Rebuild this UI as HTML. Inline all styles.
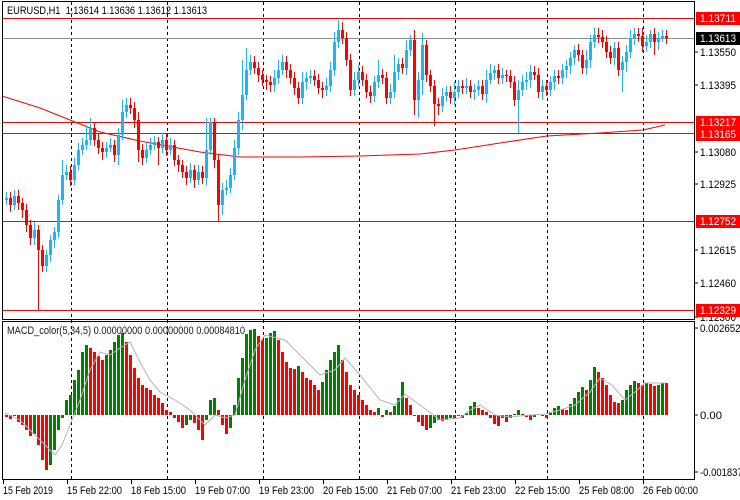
<!DOCTYPE html>
<html><head><style>
html,body{margin:0;padding:0;background:#fff;width:740px;height:500px;overflow:hidden}
svg{display:block;font-family:"Liberation Sans",sans-serif}
</style></head><body>
<svg width="740" height="500" xmlns="http://www.w3.org/2000/svg">
<g stroke="#000" stroke-dasharray="3,3">
<line x1="71.5" y1="2" x2="71.5" y2="479"/><line x1="167.5" y1="2" x2="167.5" y2="479"/><line x1="263.5" y1="2" x2="263.5" y2="479"/><line x1="359.5" y1="2" x2="359.5" y2="479"/><line x1="455.5" y1="2" x2="455.5" y2="479"/><line x1="547.5" y1="2" x2="547.5" y2="479"/><line x1="643.5" y1="2" x2="643.5" y2="479"/>
</g>
<g stroke="#f00">
<line x1="2" y1="18.5" x2="694" y2="18.5"/><line x1="2" y1="122.5" x2="694" y2="122.5"/><line x1="2" y1="133.5" x2="694" y2="133.5"/><line x1="2" y1="221.5" x2="694" y2="221.5"/><line x1="2" y1="310.5" x2="694" y2="310.5"/>
</g>
<line x1="2" y1="38.5" x2="694" y2="38.5" stroke="#8c8c8c"/>
<polyline fill="none" stroke="#f00" points="2,96 40,108 70,120 100,132 140,141 200,152 240,157 300,157 360,156 420,154 455,150 500,143 547,136 600,133 643,130 665,125"/>

<path stroke="#1eb4f5" fill="none" d="M6.5,192V205 M14.5,190V210 M34.5,222V245 M46.5,250V272 M50.5,235V262 M54.5,227V248 M58.5,195V238 M62.5,160V205 M66.5,165V180 M74.5,158V185 M78.5,143V170 M82.5,138V155 M86.5,125V150 M90.5,118V145 M106.5,142V158 M110.5,138V152 M118.5,128V165 M122.5,100V140 M126.5,98V118 M146.5,143V163 M150.5,138V155 M154.5,136V150 M162.5,133V153 M170.5,138V155 M190.5,163V183 M198.5,165V185 M206.5,118V185 M210.5,118V155 M222.5,183V215 M226.5,180V195 M230.5,168V193 M234.5,140V180 M238.5,112V155 M242.5,60V130 M246.5,48V100 M250.5,55V75 M274.5,70V92 M278.5,60V84 M282.5,55V75 M302.5,72V104 M306.5,72V90 M310.5,70V84 M326.5,78V96 M330.5,62V92 M334.5,32V76 M338.5,20V48 M354.5,72V96 M358.5,65V86 M374.5,76V102 M378.5,60V88 M390.5,84V104 M394.5,55V98 M398.5,58V80 M406.5,40V75 M410.5,35V56 M418.5,72V118 M422.5,33V95 M442.5,88V112 M446.5,86V102 M454.5,82V105 M458.5,80V98 M466.5,78V94 M474.5,84V100 M478.5,80V96 M486.5,70V103 M490.5,64V84 M494.5,65V80 M502.5,68V84 M518.5,80V133 M522.5,75V96 M526.5,72V90 M530.5,65V88 M542.5,80V100 M550.5,76V96 M554.5,70V90 M562.5,64V84 M566.5,60V78 M570.5,52V74 M574.5,45V65 M586.5,50V75 M590.5,35V68 M594.5,28V48 M614.5,42V65 M622.5,56V92 M626.5,45V72 M630.5,30V58 M634.5,28V45 M646.5,35V52 M650.5,30V48 M658.5,32V50 M662.5,30V42"/>
<path stroke="#f00" fill="none" d="M10.5,192V212 M18.5,190V210 M22.5,198V218 M26.5,204V232 M30.5,220V245 M38.5,225V310 M42.5,245V272 M70.5,166V186 M94.5,122V146 M98.5,134V154 M102.5,142V160 M114.5,140V162 M130.5,98V114 M134.5,102V128 M138.5,112V162 M142.5,144V165 M158.5,137V165 M166.5,134V156 M174.5,140V166 M178.5,155V172 M182.5,160V178 M186.5,166V185 M194.5,165V188 M202.5,166V184 M214.5,118V168 M218.5,155V222 M254.5,56V74 M258.5,62V82 M262.5,70V86 M266.5,75V90 M270.5,76V92 M286.5,56V78 M290.5,64V84 M294.5,72V95 M298.5,82V104 M314.5,70V86 M318.5,74V94 M322.5,82V98 M342.5,22V44 M346.5,32V66 M350.5,54V96 M362.5,66V86 M366.5,74V98 M370.5,86V103 M382.5,69V84 M386.5,72V104 M402.5,58V74 M414.5,30V115 M426.5,40V82 M430.5,70V92 M434.5,80V126 M438.5,98V115 M450.5,86V104 M462.5,80V94 M470.5,80V98 M482.5,80V100 M498.5,64V84 M506.5,70V82 M510.5,70V88 M514.5,76V106 M534.5,66V80 M538.5,68V98 M546.5,80V96 M558.5,70V84 M578.5,44V61 M582.5,50V74 M598.5,28V43 M602.5,30V48 M606.5,36V58 M610.5,46V64 M618.5,42V76 M638.5,28V42 M642.5,28V52 M654.5,28V55 M666.5,30V44"/>
<path fill="#1eb4f5" d="M5,198h3v2h-3z M13,196h3v9h-3z M33,230h3v8h-3z M45,255h3v11h-3z M49,240h3v15h-3z M53,232h3v8h-3z M57,200h3v32h-3z M61,175h3v25h-3z M65,172h3v3h-3z M73,165h3v15h-3z M77,150h3v15h-3z M81,145h3v5h-3z M85,140h3v5h-3z M89,128h3v12h-3z M105,148h3v4h-3z M109,145h3v3h-3z M117,135h3v20h-3z M121,112h3v23h-3z M125,105h3v7h-3z M145,150h3v8h-3z M149,145h3v5h-3z M153,142h3v3h-3z M161,140h3v8h-3z M169,145h3v5h-3z M189,170h3v8h-3z M197,172h3v8h-3z M205,150h3v28h-3z M209,122h3v28h-3z M221,190h3v15h-3z M225,188h3v2h-3z M229,175h3v13h-3z M233,148h3v27h-3z M237,120h3v28h-3z M241,95h3v25h-3z M245,70h3v25h-3z M249,62h3v8h-3z M273,78h3v7h-3z M277,70h3v8h-3z M281,62h3v8h-3z M301,82h3v16h-3z M305,78h3v4h-3z M309,76h3v2h-3z M325,86h3v4h-3z M329,70h3v16h-3z M333,42h3v28h-3z M337,30h3v12h-3z M353,80h3v10h-3z M357,72h3v8h-3z M373,82h3v14h-3z M377,75h3v7h-3z M389,92h3v6h-3z M393,72h3v20h-3z M397,64h3v8h-3z M405,50h3v18h-3z M409,40h3v10h-3z M417,80h3v20h-3z M421,45h3v35h-3z M441,96h3v10h-3z M445,92h3v4h-3z M453,92h3v6h-3z M457,86h3v6h-3z M465,86h3v2h-3z M473,90h3v2h-3z M477,86h3v4h-3z M485,80h3v14h-3z M489,73h3v7h-3z M493,70h3v3h-3z M501,75h3v3h-3z M517,90h3v10h-3z M521,82h3v8h-3z M525,80h3v2h-3z M529,72h3v8h-3z M541,86h3v6h-3z M549,82h3v8h-3z M553,76h3v6h-3z M561,70h3v8h-3z M565,66h3v4h-3z M569,58h3v8h-3z M573,50h3v8h-3z M585,60h3v8h-3z M589,42h3v18h-3z M593,35h3v7h-3z M613,48h3v10h-3z M621,62h3v8h-3z M625,52h3v10h-3z M629,38h3v14h-3z M633,34h3v4h-3z M645,42h3v4h-3z M649,34h3v8h-3z M657,38h3v4h-3z M661,36h3v2h-3z"/>
<path fill="#f00" d="M9,198h3v7h-3z M17,196h3v7h-3z M21,203h3v7h-3z M25,210h3v15h-3z M29,225h3v13h-3z M37,230h3v20h-3z M41,250h3v16h-3z M69,172h3v8h-3z M93,128h3v12h-3z M97,140h3v8h-3z M101,148h3v4h-3z M113,145h3v10h-3z M129,105h3v3h-3z M133,108h3v12h-3z M137,120h3v30h-3z M141,150h3v8h-3z M157,142h3v6h-3z M165,140h3v10h-3z M173,145h3v15h-3z M177,160h3v5h-3z M181,165h3v7h-3z M185,172h3v6h-3z M193,170h3v10h-3z M201,172h3v6h-3z M213,122h3v38h-3z M217,160h3v45h-3z M253,62h3v6h-3z M257,68h3v7h-3z M261,75h3v5h-3z M265,80h3v2h-3z M269,82h3v3h-3z M285,62h3v8h-3z M289,70h3v8h-3z M293,78h3v10h-3z M297,88h3v10h-3z M313,76h3v4h-3z M317,80h3v8h-3z M321,88h3v2h-3z M341,30h3v8h-3z M345,38h3v22h-3z M349,60h3v30h-3z M361,72h3v8h-3z M365,80h3v12h-3z M369,92h3v4h-3z M381,75h3v3h-3z M385,78h3v20h-3z M401,64h3v4h-3z M413,40h3v60h-3z M425,45h3v30h-3z M429,75h3v11h-3z M433,86h3v18h-3z M437,104h3v2h-3z M449,92h3v6h-3z M461,86h3v2h-3z M469,86h3v6h-3z M481,86h3v8h-3z M497,70h3v8h-3z M505,75h3v1h-3z M509,76h3v6h-3z M513,82h3v18h-3z M533,72h3v3h-3z M537,75h3v17h-3z M545,86h3v4h-3z M557,76h3v2h-3z M577,50h3v5h-3z M581,55h3v13h-3z M597,35h3v2h-3z M601,37h3v5h-3z M605,42h3v10h-3z M609,52h3v6h-3z M617,48h3v22h-3z M637,34h3v2h-3z M641,36h3v10h-3z M653,34h3v8h-3z M665,36h3v2h-3z"/>

<path fill="#008000" d="M13,415h3v1h-3z M33,415h3v19h-3z M49,415h3v50h-3z M53,415h3v35h-3z M57,415h3v15h-3z M61,415h3v3h-3z M65,400h3v15h-3z M69,395h3v20h-3z M73,380h3v35h-3z M77,370h3v45h-3z M81,352h3v63h-3z M85,345h3v70h-3z M105,355h3v60h-3z M109,350h3v65h-3z M113,342h3v73h-3z M117,335h3v80h-3z M121,333h3v82h-3z M185,415h3v10h-3z M189,415h3v5h-3z M205,415h3v5h-3z M209,400h3v15h-3z M213,398h3v17h-3z M229,415h3v13h-3z M233,405h3v10h-3z M237,378h3v37h-3z M241,358h3v57h-3z M245,334h3v81h-3z M249,330h3v85h-3z M253,329h3v86h-3z M265,338h3v77h-3z M269,333h3v82h-3z M273,331h3v84h-3z M297,366h3v49h-3z M321,382h3v33h-3z M325,370h3v45h-3z M329,360h3v55h-3z M333,352h3v63h-3z M337,345h3v70h-3z M377,408h3v7h-3z M385,410h3v5h-3z M393,406h3v9h-3z M397,398h3v17h-3z M401,382h3v33h-3z M429,415h3v13h-3z M433,415h3v8h-3z M437,415h3v5h-3z M445,415h3v5h-3z M449,415h3v3h-3z M457,415h3v1h-3z M465,413h3v2h-3z M469,406h3v9h-3z M473,402h3v13h-3z M501,415h3v3h-3z M509,415h3v3h-3z M513,414h3v1h-3z M517,410h3v5h-3z M533,415h3v2h-3z M537,414h3v1h-3z M549,412h3v3h-3z M553,408h3v7h-3z M557,406h3v9h-3z M569,404h3v11h-3z M573,398h3v17h-3z M577,392h3v23h-3z M581,387h3v28h-3z M589,380h3v35h-3z M593,367h3v48h-3z M621,400h3v15h-3z M625,390h3v25h-3z M629,385h3v30h-3z M633,381h3v34h-3z M645,383h3v32h-3z M657,385h3v30h-3z M661,383h3v32h-3z"/>
<path fill="#f00" d="M5,415h3v2h-3z M9,415h3v4h-3z M17,415h3v7h-3z M21,415h3v10h-3z M25,415h3v15h-3z M29,415h3v21h-3z M37,415h3v30h-3z M41,415h3v45h-3z M45,415h3v55h-3z M89,348h3v67h-3z M93,352h3v63h-3z M97,356h3v59h-3z M101,360h3v55h-3z M125,342h3v73h-3z M129,355h3v60h-3z M133,368h3v47h-3z M137,378h3v37h-3z M141,385h3v30h-3z M145,388h3v27h-3z M149,390h3v25h-3z M153,395h3v20h-3z M157,398h3v17h-3z M161,403h3v12h-3z M165,410h3v5h-3z M169,412h3v3h-3z M173,415h3v3h-3z M177,415h3v7h-3z M181,415h3v13h-3z M193,415h3v8h-3z M197,415h3v15h-3z M201,415h3v25h-3z M217,410h3v5h-3z M221,415h3v10h-3z M225,415h3v19h-3z M257,336h3v79h-3z M261,340h3v75h-3z M277,340h3v75h-3z M281,352h3v63h-3z M285,362h3v53h-3z M289,368h3v47h-3z M293,369h3v46h-3z M301,372h3v43h-3z M305,378h3v37h-3z M309,380h3v35h-3z M313,385h3v30h-3z M317,390h3v25h-3z M341,360h3v55h-3z M345,372h3v43h-3z M349,385h3v30h-3z M353,390h3v25h-3z M357,395h3v20h-3z M361,400h3v15h-3z M365,405h3v10h-3z M369,410h3v5h-3z M373,412h3v3h-3z M381,415h3v2h-3z M389,412h3v3h-3z M405,398h3v17h-3z M409,405h3v10h-3z M413,415h3v1h-3z M417,415h3v7h-3z M421,415h3v11h-3z M425,415h3v15h-3z M441,415h3v6h-3z M453,415h3v4h-3z M461,415h3v3h-3z M477,408h3v7h-3z M481,410h3v5h-3z M485,412h3v3h-3z M489,415h3v3h-3z M493,415h3v9h-3z M497,415h3v11h-3z M505,415h3v7h-3z M521,414h3v1h-3z M525,415h3v2h-3z M529,415h3v5h-3z M541,415h3v1h-3z M545,415h3v3h-3z M561,409h3v6h-3z M565,410h3v5h-3z M585,390h3v25h-3z M597,372h3v43h-3z M601,378h3v37h-3z M605,385h3v30h-3z M609,395h3v20h-3z M613,402h3v13h-3z M617,403h3v12h-3z M637,383h3v32h-3z M641,385h3v30h-3z M649,384h3v31h-3z M653,386h3v29h-3z M665,383h3v32h-3z"/>
<polyline fill="none" stroke="#b4b4b4" points="5,413 20,420 40,440 55,455 62,445 70,425 80,400 90,370 100,352 110,355 120,348 130,342 140,362 150,380 160,392 175,400 190,410 205,425 215,415 225,418 235,415 245,380 255,350 265,335 285,340 300,355 320,375 335,370 345,358 360,375 380,400 395,405 405,394 420,405 440,420 460,418 470,410 480,405 495,415 510,417 530,415 545,414 560,410 575,405 590,392 600,378 612,385 625,400 635,392 645,383 665,383"/>

<rect x="2.5" y="1.5" width="692" height="318" fill="none" stroke="#000"/>
<rect x="2.5" y="321.5" width="692" height="158" fill="none" stroke="#000"/>
<text x="7" y="14" font-size="11" textLength="200" lengthAdjust="spacingAndGlyphs" xml:space="preserve">EURUSD,H1  1.13614 1.13636 1.13612 1.13613</text>
<text x="7" y="334" font-size="11" fill="#1a1a1a" textLength="238" lengthAdjust="spacingAndGlyphs">MACD_color(5,34,5) 0.00000000 0.00000000 0.00084810</text>

<g stroke="#000">
<line x1="694" y1="52" x2="698" y2="52"/><line x1="694" y1="85" x2="698" y2="85"/><line x1="694" y1="152" x2="698" y2="152"/><line x1="694" y1="184" x2="698" y2="184"/><line x1="694" y1="250" x2="698" y2="250"/><line x1="694" y1="283" x2="698" y2="283"/><line x1="694" y1="317" x2="698" y2="317"/>
<line x1="694" y1="328" x2="698" y2="328"/><line x1="694" y1="415" x2="698" y2="415"/><line x1="694" y1="472" x2="698" y2="472"/>
</g>
<g font-size="11">
<text x="700" y="56" textLength="36" lengthAdjust="spacingAndGlyphs">1.13550</text><text x="700" y="89" textLength="36" lengthAdjust="spacingAndGlyphs">1.13395</text><text x="700" y="156" textLength="36" lengthAdjust="spacingAndGlyphs">1.13080</text><text x="700" y="188" textLength="36" lengthAdjust="spacingAndGlyphs">1.12925</text><text x="700" y="254" textLength="36" lengthAdjust="spacingAndGlyphs">1.12615</text><text x="700" y="287" textLength="36" lengthAdjust="spacingAndGlyphs">1.12460</text><text x="700" y="321" textLength="36" lengthAdjust="spacingAndGlyphs">1.12300</text>
<text x="700" y="332" textLength="46" lengthAdjust="spacingAndGlyphs">0.0026524</text><text x="700" y="419" textLength="22" lengthAdjust="spacingAndGlyphs">0.00</text><text x="700" y="476" textLength="48" lengthAdjust="spacingAndGlyphs">-0.0018370</text>
</g>
<rect x="696" y="12" width="44" height="13" fill="#f00"/><text x="700" y="22" font-size="11" fill="#fff" textLength="36" lengthAdjust="spacingAndGlyphs">1.13711</text>
<rect x="696" y="32" width="44" height="13" fill="#000"/><text x="700" y="42" font-size="11" fill="#fff" textLength="36" lengthAdjust="spacingAndGlyphs">1.13613</text>
<rect x="696" y="116" width="44" height="13" fill="#f00"/><text x="700" y="126" font-size="11" fill="#fff" textLength="36" lengthAdjust="spacingAndGlyphs">1.13217</text>
<rect x="696" y="128" width="44" height="13" fill="#f00"/><text x="700" y="138" font-size="11" fill="#fff" textLength="36" lengthAdjust="spacingAndGlyphs">1.13165</text>
<rect x="696" y="215" width="44" height="13" fill="#f00"/><text x="700" y="225" font-size="11" fill="#fff" textLength="36" lengthAdjust="spacingAndGlyphs">1.12752</text>
<rect x="696" y="304" width="44" height="13" fill="#f00"/><text x="700" y="314" font-size="11" fill="#fff" textLength="36" lengthAdjust="spacingAndGlyphs">1.12329</text>

<g stroke="#000">
<line x1="3.5" y1="479" x2="3.5" y2="484"/><line x1="67.5" y1="479" x2="67.5" y2="484"/><line x1="131.5" y1="479" x2="131.5" y2="484"/><line x1="195.5" y1="479" x2="195.5" y2="484"/><line x1="259.5" y1="479" x2="259.5" y2="484"/><line x1="323.5" y1="479" x2="323.5" y2="484"/><line x1="387.5" y1="479" x2="387.5" y2="484"/><line x1="451.5" y1="479" x2="451.5" y2="484"/><line x1="515.5" y1="479" x2="515.5" y2="484"/><line x1="579.5" y1="479" x2="579.5" y2="484"/><line x1="643.5" y1="479" x2="643.5" y2="484"/>
</g>
<g font-size="11">
<text x="3" y="494" textLength="50" lengthAdjust="spacingAndGlyphs">15 Feb 2019</text>
<text x="67" y="494" textLength="55" lengthAdjust="spacingAndGlyphs">15 Feb 22:00</text>
<text x="131" y="494" textLength="55" lengthAdjust="spacingAndGlyphs">18 Feb 15:00</text>
<text x="195" y="494" textLength="55" lengthAdjust="spacingAndGlyphs">19 Feb 07:00</text>
<text x="259" y="494" textLength="55" lengthAdjust="spacingAndGlyphs">19 Feb 23:00</text>
<text x="323" y="494" textLength="55" lengthAdjust="spacingAndGlyphs">20 Feb 15:00</text>
<text x="387" y="494" textLength="55" lengthAdjust="spacingAndGlyphs">21 Feb 07:00</text>
<text x="451" y="494" textLength="55" lengthAdjust="spacingAndGlyphs">21 Feb 23:00</text>
<text x="515" y="494" textLength="55" lengthAdjust="spacingAndGlyphs">22 Feb 15:00</text>
<text x="579" y="494" textLength="55" lengthAdjust="spacingAndGlyphs">25 Feb 08:00</text>
<text x="643" y="494" textLength="55" lengthAdjust="spacingAndGlyphs">26 Feb 00:00</text>
</g>
</svg>
</body></html>
